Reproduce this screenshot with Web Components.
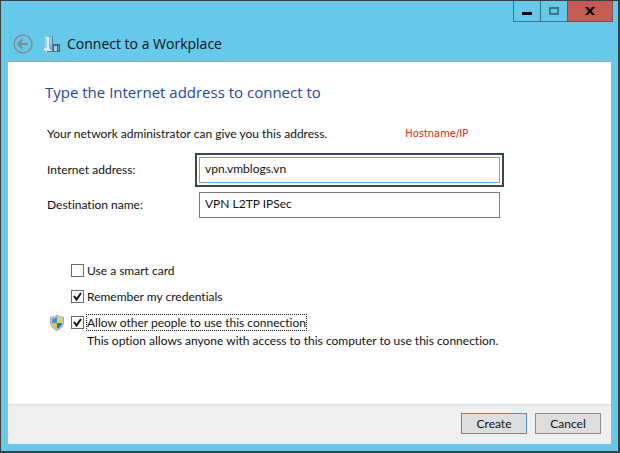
<!DOCTYPE html>
<html lang="en">
<head>
<meta charset="utf-8">
<title>Connect to a Workplace</title>
<style>
body {
  margin: 0;
  font: 12px/16px Lato, "Open Sans", sans-serif;
  font-variant-ligatures: none;
  color: #111;
  --heading-font: "Open Sans", "Noto Sans", sans-serif;
}
</style>
</head>
<body>
<wizard-window>
  <window-controls slot="controls"></window-controls>
  <wizard-title slot="title">Connect to a Workplace</wizard-title>
  <connect-form></connect-form>
  <wizard-button slot="actions" primary>Create</wizard-button>
  <wizard-button slot="actions">Cancel</wizard-button>
</wizard-window>

<script>
function define(name, html, setup) {
  const template = document.createElement('template');
  template.innerHTML = html;

  customElements.define(name, class extends HTMLElement {
    constructor() {
      super();
      this.attachShadow({ mode: 'open' });
      this.shadowRoot.appendChild(template.content.cloneNode(true));
    }

    connectedCallback() {
      if (setup) setup(this, this.shadowRoot);
    }
  });
}

define('wizard-window', `
<style>
:host {
  display: flex;
  flex-direction: column;
  box-sizing: border-box;
  min-height: 100vh;
  padding: 0 7px 7px;
  border: solid #3d3f41;
  border-width: 1px 2px 2px 1px;
  background: #66c9ea;
}
header { display: flex; flex-direction: column; }
.controls { display: flex; justify-content: flex-end; margin-right: -2px; }
main {
  flex: 1;
  box-sizing: border-box;
  border-top: 1px solid #8fa9c2;
  background: #fff;
}
footer {
  display: flex;
  justify-content: flex-end;
  gap: 8px;
  padding: 8px 10px 10px;
  border-top: 1px solid #dfdfdf;
  background: #efefef;
}
</style>
<header>
  <div class="controls"><slot name="controls"></slot></div>
  <slot name="title"></slot>
</header>
<main><slot></slot></main>
<footer><slot name="actions"></slot></footer>
`);

define('window-controls', `
<style>
:host { display: flex; }
button {
  box-sizing: border-box;
  width: 27px;
  height: 21px;
  margin: 0;
  padding: 0;
  border: 1px solid #3f7484;
  border-top: 0;
  border-right: 0;
  background: transparent;
  line-height: 0;
}
.close {
  width: 46px;
  border-color: #7d4a4c;
  border-right: 1px solid #6b5a62;
  background: #c65b52;
}
</style>
<button type="button" aria-label="Minimize">
  <svg width="24" height="20" viewBox="0 0 24 20"><path d="M7 11h10v3H7z" fill="#000"/></svg>
</button>
<button type="button" aria-label="Maximize" disabled>
  <svg width="24" height="20" viewBox="0 0 24 20"><path d="M8 7h8v6H8z" fill="none" stroke="#3a7688" stroke-width="2"/></svg>
</button>
<button type="button" class="close" aria-label="Close">
  <svg width="24" height="20" viewBox="0 0 24 20"><path d="M7 6h3l2 2.500L14 6h3l-3.300 4 3.300 4h-3l-2-2.500L10 14H7l3.300-4z" fill="#000"/></svg>
</button>
`);

define('wizard-title', `
<style>
:host {
  display: flex;
  align-items: center;
  height: 39px;
  padding: 4px 0 0 5px;
  box-sizing: border-box;
}
button { padding: 0; border: 0; background: none; line-height: 0; }
.place { margin: 0 7px 0 11px; }
h1 { margin: 0; font: 400 14px/20px var(--heading-font); }
</style>
<button type="button" aria-label="Back" disabled>
  <svg width="20" height="20" viewBox="0 0 20 20" fill="none" stroke="#7d8d94">
    <circle cx="10" cy="10" r="9" stroke-width="1.400"/>
    <path d="M5.500 10H15M9.500 5.500L5 10l4.500 4.500" stroke-width="2"/>
  </svg>
</button>
<svg class="place" width="16" height="16" viewBox="0 0 16 16">
  <path d="M1 0h8v15H1z" fill="#7fb3d8"/>
  <path d="M1 0h2v12H1z" fill="#a5d3ec"/>
  <path d="M3 1h2v12H3z" fill="#e3f4fc"/>
  <path d="M6 1h2v8H6z" fill="#9fcbe8"/>
  <path d="M8 0h1v15H8z" fill="#4584ae"/>
  <path d="M0 12h4l4 3v1H3l-3-2z" fill="#dceaf1"/>
  <path d="M3 15h13v1H3z" fill="#557181"/>
  <path d="M9 8h7v7H9z" fill="#496674"/>
  <path d="M10 10h3v5h-3z" fill="#a9cddd"/>
  <path d="M14 10h1v4h-1z" fill="#7195a5"/>
</svg>
<h1><slot></slot></h1>
`);

define('connect-form', `
<style>
:host { display: block; padding: 19px 37px 16px; }
h2 {
  margin: 0 0 22px;
  color: #2347a5;
  font: 400 15px/22px var(--heading-font);
}
.intro { display: flex; align-items: center; gap: 78px; padding-left: 2px; }
.intro p { margin: 0; }
.note {
  color: #f01414;
  font: 11px/18px "DejaVu Sans Condensed", "DejaVu Sans", sans-serif;
}
.fields {
  display: grid;
  gap: 9px;
  margin: 14px 74px 0 2px;
}
.options {
  display: grid;
  gap: 9px;
  margin-top: 44px;
  padding-left: 5px;
}
</style>
<h2>Type the Internet address to connect to</h2>
<div class="intro">
  <p>Your network administrator can give you this address.</p>
  <span class="note">Hostname/IP</span>
</div>
<div class="fields">
  <text-field label="Internet address:" value="vpn.vmblogs.vn" active></text-field>
  <text-field label="Destination name:" value="VPN L2TP IPSec"></text-field>
</div>
<div class="options">
  <check-option>Use a smart card</check-option>
  <check-option checked>Remember my credentials</check-option>
  <check-option checked active>
    <shield-icon slot="icon"></shield-icon>
    Allow other people to use this connection
    <span slot="hint">This option allows anyone with access to this computer to use this connection.</span>
  </check-option>
</div>
`);

define('text-field', `
<style>
:host {
  display: grid;
  grid-template-columns: 152px 1fr;
  align-items: center;
}
input {
  box-sizing: border-box;
  width: 100%;
  height: 26px;
  padding: 0 5px 3px;
  border: 1px solid #7c7c7c;
  border-radius: 0;
  outline: 0;
  background: #fff;
  color: inherit;
  font: inherit;
}
/* heavy frame around the field being pointed out */
:host([active]) input {
  border-color: #56b0dc;
  outline: 2px solid #444;
  outline-offset: 2px;
}
</style>
<label for="input"></label>
<input id="input" type="text">
`, (host, root) => {
  root.querySelector('label').textContent = host.getAttribute('label');
  root.querySelector('input').value = host.getAttribute('value');
});

define('check-option', `
<style>
:host {
  display: grid;
  grid-template-columns: 21px 13px 1fr;
  align-items: center;
}
.box { display: grid; }
.box > * { grid-area: 1 / 1; }
input {
  appearance: none;
  box-sizing: border-box;
  width: 13px;
  height: 13px;
  margin: 0;
  border: 1px solid #6a6a6a;
  background: #fff;
}
svg { display: none; pointer-events: none; }
input:checked + svg { display: block; }
label {
  justify-self: start;
  margin-left: 2px;
  border: 1px dotted transparent;
  line-height: 15px;
}
:host([active]) label { border-color: #222; }
.hint { grid-column: 3; margin-left: 3px; padding-top: 2px; }
</style>
<slot name="icon"><span></span></slot>
<span class="box">
  <input id="check" type="checkbox">
  <svg width="13" height="13" viewBox="0 0 13 13"><path d="M3 6l2.500 3.500L10 3" fill="none" stroke="#111" stroke-width="2"/></svg>
</span>
<label for="check"><slot></slot></label>
<div class="hint"><slot name="hint"></slot></div>
`, (host, root) => {
  root.querySelector('input').checked = host.hasAttribute('checked');
  if (!host.querySelector('[slot="hint"]')) root.querySelector('.hint').remove();
});

define('shield-icon', `
<style>
:host { display: block; line-height: 0; }
</style>
<svg width="14" height="16" viewBox="0 0 14 16">
  <path d="M7 0c2 1.500 4 2 6.500 2.200V7c0 4-2.500 7-6.500 8.700C3 14 .5 11 .5 7V2.200C3 2 5 1.500 7 0z" fill="#c3cbd1" stroke="#89949c" stroke-width=".7"/>
  <path d="M7 2v6H2V3.700C4 3.500 5.600 3 7 2z" fill="#3595dd"/>
  <path d="M7 2v6h5V3.700C10 3.500 8.400 3 7 2z" fill="#f8d337"/>
  <path d="M2 8h5v6C4.300 12.700 2.300 10.700 2 8z" fill="#f3c522"/>
  <path d="M12 8H7v6c2.700-1.300 4.700-3.300 5-6z" fill="#2377c8"/>
</svg>
`);

define('wizard-button', `
<style>
:host { display: block; }
button {
  box-sizing: border-box;
  min-width: 66px;
  height: 21px;
  padding: 0 8px;
  border: 1px solid #8c8c8c;
  border-radius: 0;
  background: #dedede;
  color: inherit;
  font: inherit;
  line-height: 18px;
}
:host([primary]) button { border-color: #4a90c8; }
</style>
<button type="button"><slot></slot></button>
`);
</script>
</body>
</html>
